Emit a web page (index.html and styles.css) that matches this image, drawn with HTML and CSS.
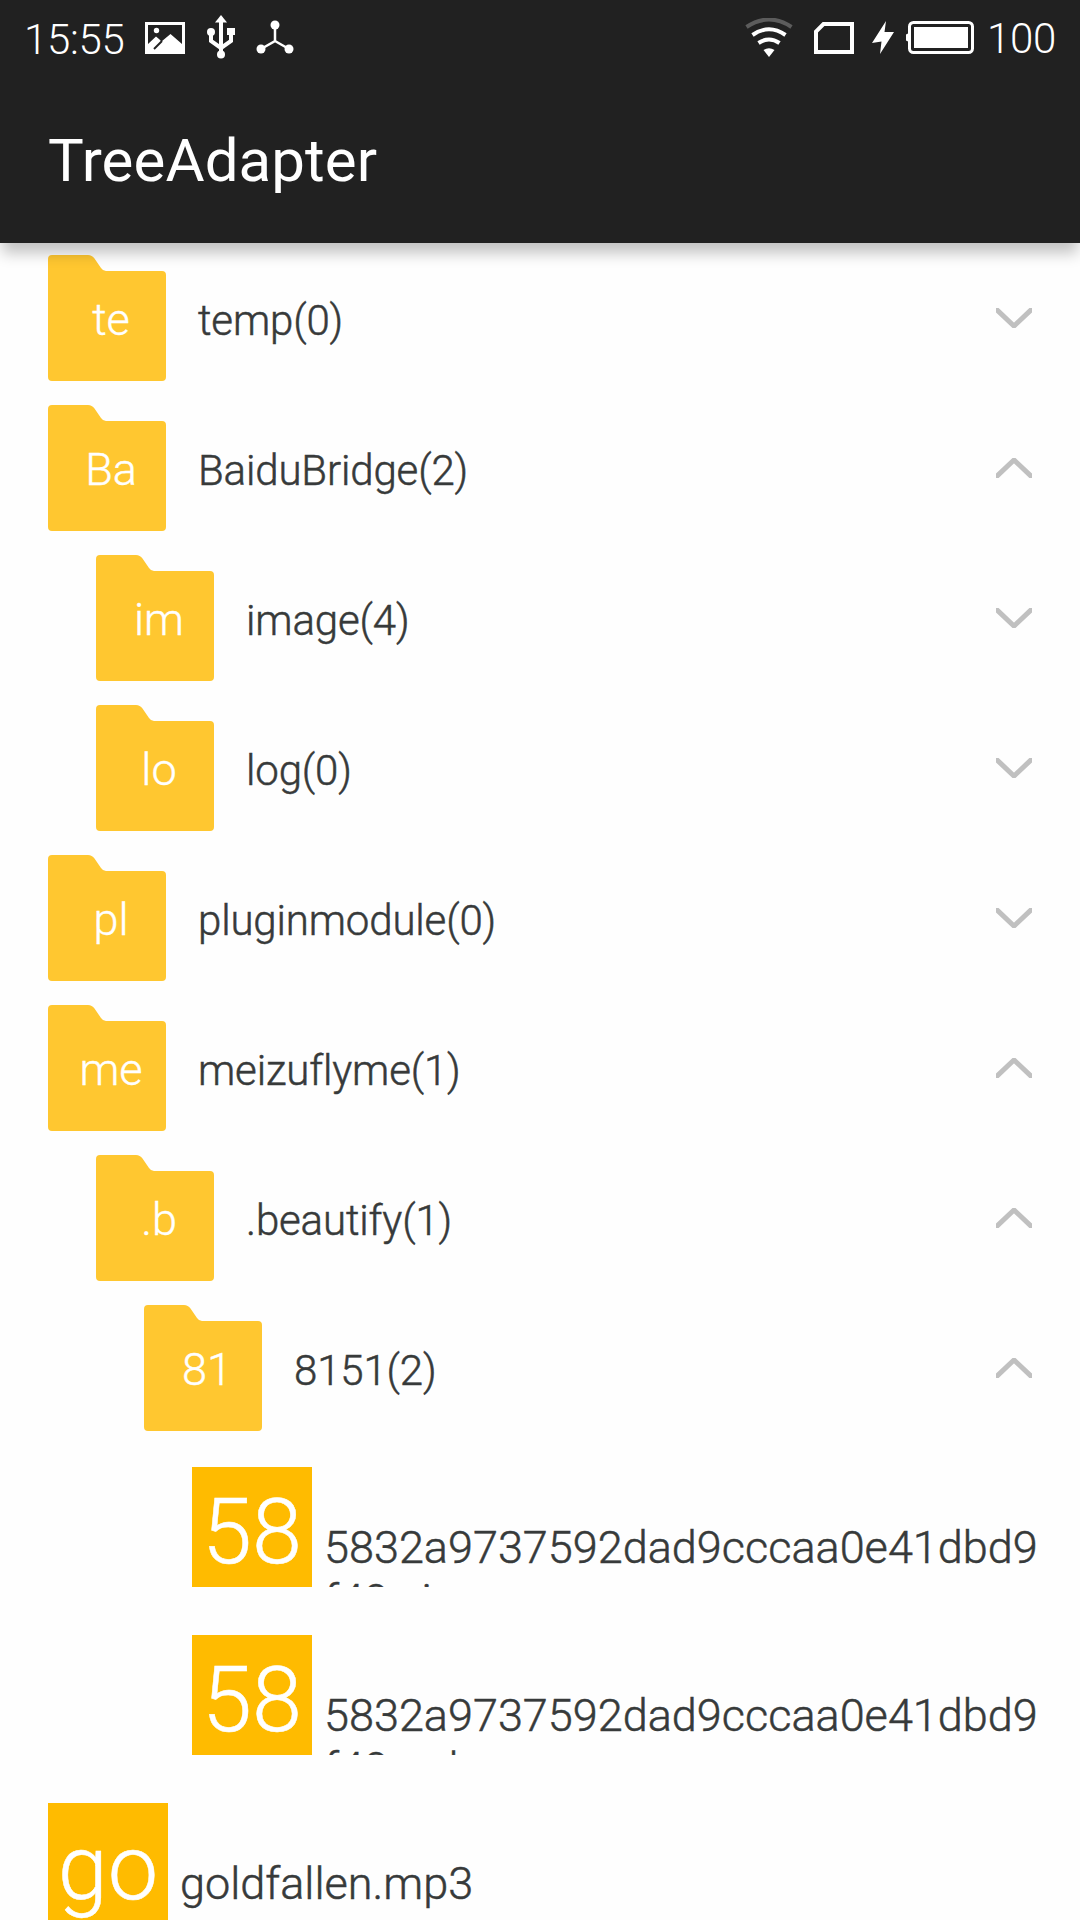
FILE: index.html
```html
<!DOCTYPE html>
<html lang="en">
<head>
<meta charset="utf-8">
<title>TreeAdapter</title>
<link rel="stylesheet" href="styles.css">
</head>
<body>
<svg class="defs" aria-hidden="true">
  <symbol id="folder" viewBox="0 0 118 126"><path d="M4 0H40Q44 0 46.500 3.500L53 13Q55 16 58 16H114Q118 16 118 20V122Q118 126 114 126H4Q0 126 0 122V4Q0 0 4 0Z"/></symbol>
  <symbol id="down" viewBox="0 0 36 20"><path d="M-1 0L18 18L37 0"/></symbol>
  <symbol id="up" viewBox="0 0 36 20"><path d="M-1 20L18 2L37 20"/></symbol>
</svg>
<header class="header">
  <div class="status">
    <span class="time">15:55</span>
    <svg class="icon-picture" width="40" height="32" viewBox="0 0 40 32"><path fill-rule="evenodd" d="M0 0H40V32H0ZM3 3V22L11 14.500L14 17L16.500 19.500L25.500 12L37 22V3Z"/><circle cx="11.500" cy="8.500" r="2.700"/><path d="M9 27L17 19" class="cut"/></svg>
    <svg class="icon-usb" width="30" height="46" viewBox="0 0 30 46"><path d="M15 1L21 8.500H9Z"/><circle cx="5" cy="18" r="4"/><rect x="21" y="14" width="8" height="7"/><circle cx="15" cy="40.500" r="4"/><path class="line" d="M15 6V40M5 18V27L15 34M25 18V27L15 34"/></svg>
    <svg class="icon-hub" width="38" height="34" viewBox="0 0 38 34"><circle cx="19" cy="5" r="4.500"/><circle cx="5" cy="29" r="4.500"/><circle cx="33" cy="29" r="4.500"/><path class="line thin" d="M19 5V21L5 29M19 21L33 29"/></svg>
    <span class="spacer"></span>
    <svg class="icon-wifi" width="48" height="40" viewBox="0 0 48 40"><path class="arc dim" d="M1.500 9Q24 -6 46.500 9"/><path class="arc" d="M7.500 17Q24 5.500 40.500 17"/><path class="arc" d="M13.500 25Q24 18 34.500 25"/><path d="M24 39L18.500 32Q24 28.500 29.500 32Z"/></svg>
    <svg class="icon-sim" width="40" height="32" viewBox="0 0 40 32"><path class="arc" d="M9.500 2H38V30H2V9.500Z"/></svg>
    <svg class="icon-bolt" width="22" height="34" viewBox="0 0 22 34"><path d="M14 0L0 22L9.500 20.500L8 33L22 11H12.500Z"/></svg>
    <svg class="icon-battery" width="68" height="33" viewBox="0 0 68 33"><rect x="3.500" y="1.500" width="63" height="30" rx="4" class="case"/><path d="M0 13.500L3 12V21L0 19.500Z"/><rect x="8" y="6" width="54" height="21"/></svg>
    <span class="percent">100</span>
  </div>
  <h1 class="title">TreeAdapter</h1>
</header>
<main class="tree">
  <div class="row"><span class="folder"><svg><use href="#folder"/></svg><b>te</b></span><span class="name">temp(0)</span><svg class="chevron"><use href="#down"/></svg></div>
  <div class="row"><span class="folder"><svg><use href="#folder"/></svg><b>Ba</b></span><span class="name">BaiduBridge(2)</span><svg class="chevron"><use href="#up"/></svg></div>
  <div class="row level-1"><span class="folder"><svg><use href="#folder"/></svg><b>im</b></span><span class="name">image(4)</span><svg class="chevron"><use href="#down"/></svg></div>
  <div class="row level-1"><span class="folder"><svg><use href="#folder"/></svg><b>lo</b></span><span class="name">log(0)</span><svg class="chevron"><use href="#down"/></svg></div>
  <div class="row"><span class="folder"><svg><use href="#folder"/></svg><b>pl</b></span><span class="name">pluginmodule(0)</span><svg class="chevron"><use href="#down"/></svg></div>
  <div class="row"><span class="folder"><svg><use href="#folder"/></svg><b>me</b></span><span class="name">meizuflyme(1)</span><svg class="chevron"><use href="#up"/></svg></div>
  <div class="row level-1"><span class="folder"><svg><use href="#folder"/></svg><b>.b</b></span><span class="name">.beautify(1)</span><svg class="chevron"><use href="#up"/></svg></div>
  <div class="row level-2"><span class="folder"><svg><use href="#folder"/></svg><b>81</b></span><span class="name">8151(2)</span><svg class="chevron"><use href="#up"/></svg></div>
  <div class="file level-3"><span class="tile">58</span><span class="filename">5832a9737592dad9cccaa0e41dbd9f49.zip</span></div>
  <div class="file level-3"><span class="tile">58</span><span class="filename">5832a9737592dad9cccaa0e41dbd9f49.apk</span></div>
  <div class="file"><span class="tile">go</span><span class="filename">goldfallen.mp3</span></div>
</main>
</body>
</html>
```
FILE: styles.css
```css
* { box-sizing: border-box; }
body {
  margin: 0;
  height: 1920px;
  overflow: hidden;
  background: #fefefe;
  color: #373a3a;
  font-family: Roboto, "Noto Sans", sans-serif;
  font-weight: 300;
}
.defs { display: none; }
.header {
  position: relative;
  z-index: 1;
  height: 243px;
  background: #212121;
  color: #fff;
  box-shadow: 0 12px 14px -2px rgba(0, 0, 0, 0.24);
}
.status {
  display: flex;
  height: 75px;
  padding: 0 24px;
  font-size: 42px;
  line-height: 49px;
  letter-spacing: -0.3px;
  fill: #fff;
}
.status svg { flex: none; }
.status .line { fill: none; stroke: #fff; stroke-width: 4; }
.status .thin { stroke-width: 2.5; }
.status .arc { fill: none; stroke: #fff; stroke-width: 4; }
.status .dim { stroke: #5c5c5c; }
.status .case { fill: none; stroke: #fff; stroke-width: 3; }
.status .cut { stroke: #212121; stroke-width: 2; }
.time { width: 121px; padding-top: 15px; }
.icon-picture { margin-top: 22px; }
.icon-usb { margin: 14px 0 0 21px; }
.icon-hub { margin: 20px 0 0 20px; }
.spacer { flex: 1; }
.icon-wifi { margin: 18px 21px 0 0; }
.icon-sim { margin: 22px 18px 0 0; }
.icon-bolt { margin: 21px 12px 0 0; }
.icon-battery { margin: 21px 13px 0 0; }
.percent { padding-top: 14px; }
.title {
  margin: 0;
  padding: 51px 48px 0;
  font-size: 60px;
  font-weight: 400;
  line-height: 70px;
  letter-spacing: 0.1px;
}
.row {
  display: flex;
  align-items: center;
  gap: 24px;
  height: 150px;
  padding: 0 48px;
}
.folder {
  display: grid;
  width: 126px;
  height: 126px;
}
.folder > * { grid-area: 1 / 1; }
.folder svg { width: 118px; height: 126px; fill: #ffc730; }
.folder b {
  z-index: 1;
  place-self: center;
  padding-top: 2px;
  color: #fff;
  font-size: 45px;
  font-weight: 300;
  line-height: 53px;
  -webkit-text-stroke: 0.4px #fff;
}
.name {
  flex: 1;
  padding-top: 6px;
  font-size: 42px;
  line-height: 50px;
  letter-spacing: -0.15px;
  -webkit-text-stroke: 0.5px #373a3a;
}
.chevron {
  width: 36px;
  height: 20px;
  fill: none;
  stroke: #c0c0c0;
  stroke-width: 5;
}
.file {
  display: flex;
  align-items: baseline;
  gap: 12px;
  height: 120px;
  margin: 24px 0 48px;
  padding: 0 36px 0 48px;
  overflow: hidden;
}
.file + .file { margin-top: 0; }
.level-1 { padding-left: 96px; }
.level-2 { padding-left: 144px; }
.level-3 { padding-left: 192px; }
.tile {
  flex: none;
  width: 120px;
  height: 120px;
  background: #ffbb00;
  color: #fff;
  font-size: 90px;
  line-height: 131px;
  text-align: center;
  -webkit-text-stroke: 0.5px #fff;
}
.filename {
  flex: 1;
  min-width: 0;
  font-size: 45px;
  line-height: 53px;
  word-break: break-all;
  -webkit-text-stroke: 0.5px #373a3a;
}
```
